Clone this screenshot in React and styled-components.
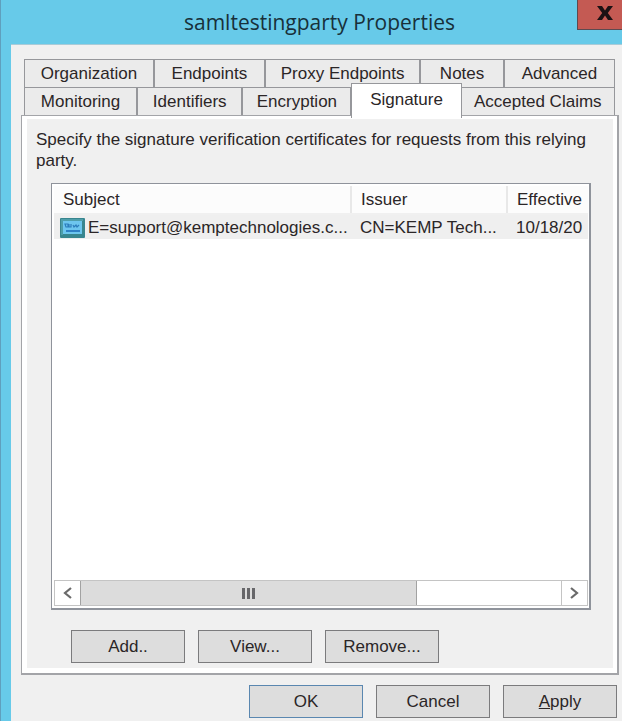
import { useState } from 'react'
import styled, { createGlobalStyle } from 'styled-components'

const GlobalStyle = createGlobalStyle`
  * { box-sizing: border-box; }
  body {
    margin: 0;
    color: #2b2627;
    font-family: "Liberation Sans", Arial, sans-serif;
    font-size: 17px;
    line-height: 21px;
  }
  button {
    font: inherit;
    color: inherit;
    padding: 0;
  }
`;

const Window = styled.div`
  display: flex;
  flex-direction: column;
  min-height: 100vh;
  border-left: 1px solid #5f9fbd;
  background: #67cae9;
`;

const TitleBar = styled.header`
  display: flex;
  align-items: flex-start;
  height: 44px;
  padding-left: 61px;
`;

const Title = styled.h1`
  flex: 1;
  margin: 0;
  text-align: center;
  font-family: "Open Sans", "Noto Sans", sans-serif;
  font-size: 21px;
  font-weight: 400;
  line-height: 44px;
  color: #18303a;
`;

const CloseButton = styled.button`
  display: flex;
  align-items: center;
  justify-content: center;
  width: 45px;
  height: 30px;
  padding: 0 0 4px 10px;
  border: 1px solid #5d4a50;
  border-width: 0 0 1px 1px;
  background: #c45a53;
`;

const Body = styled.main`
  flex: 1;
  margin-left: 10px;
  padding: 14px 3px 4px 10px;
  border-top: 1px solid #a9cbd8;
  background: #f0f0f0;
`;

const TabRow = styled.div`
  display: flex;
  margin: 0 4px 0 3px;
  height: 28px;
  border-left: 1px solid #96979b;
`;

const Tab = styled.button`
  position: relative;
  flex: ${({ $size }) => $size} 1 0;
  border: 1px solid #96979b;
  border-width: 1px 2px 0 0;
  background: #ebebeb;
  white-space: nowrap;
  &:last-child {
    border-right-width: 1px;
  }
  &[aria-selected='true'] {
    z-index: 1;
    margin: -4px 0 -3px -1px;
    padding-bottom: 3px;
    border-width: 1px 1px 0 1px;
    background: #fff;
  }
`;

const Panel = styled.section`
  padding: 3px 4px 5px 5px;
  border: 1px solid #a3a4a8;
  border-width: 1px 2px 2px 1px;
  background: #fff;
`;

const PanelInner = styled.div`
  padding: 10px 22px 5px 9px;
  background: #f0f0f0;
`;

const Description = styled.p`
  margin: 0 0 12px;
`;

const ListView = styled.div`
  display: flex;
  flex-direction: column;
  min-height: 427px;
  margin-left: 15px;
  padding: 2px 1px 2px 2px;
  border: 1px solid #8f939b;
  border-width: 1px 2px 2px 1px;
  background: #fff;
`;

const Table = styled.table`
  width: 100%;
  table-layout: fixed;
  border-collapse: collapse;
`;

const HeadCell = styled.th`
  width: ${({ $width }) => $width};
  height: 28px;
  padding: 0 0 0 9px;
  border-right: 2px solid #e8e8e8;
  border-bottom: 2px solid #f0f0f0;
  background: #fcfcfc;
  font-weight: 400;
  text-align: left;
  white-space: nowrap;
  overflow: hidden;
  &:last-child {
    border-right: 0;
  }
`;

const Cell = styled.td`
  height: 25px;
  padding: 0 0 0 9px;
  background: #efefef;
  white-space: nowrap;
  overflow: hidden;
`;

const SubjectCell = styled(Cell)`
  padding-left: 6px;
  svg {
    margin-right: 3px;
    vertical-align: -5px;
  }
`;

const ScrollBar = styled.div`
  display: flex;
  height: 26px;
  margin: auto 0 0;
  border: 1px solid #c4c4c4;
`;

const ScrollArrow = styled.button`
  display: flex;
  align-items: center;
  justify-content: center;
  width: 25px;
  border: 0;
  background: #fff;
`;

const Track = styled.div`
  flex: 1;
  border-right: 1px solid #c4c4c4;
`;

const Thumb = styled.div`
  display: flex;
  align-items: center;
  justify-content: center;
  gap: 2px;
  width: 70%;
  height: 100%;
  border: 1px solid #a2a2a2;
  border-width: 0 1px;
  background: #dcdcdc;
`;

const Grip = styled.span`
  width: 3px;
  height: 11px;
  background: #67676a;
`;

const ButtonRow = styled.div`
  display: flex;
  gap: 13px;
  justify-content: ${({ $align }) => $align};
`;

const ListActions = styled(ButtonRow)`
  margin: 20px 0 0 35px;
`;

const DialogActions = styled(ButtonRow)`
  margin: 10px 2px 0 0;
`;

const PushButton = styled.button`
  width: 114px;
  height: 33px;
  border: 1px solid ${({ $primary }) => ($primary ? '#5a87b0' : '#7b7b7d')};
  background: #dddddd;
`;

const CertIcon = () => (
  <svg width='25' height='20' viewBox='0 0 25 20' aria-hidden='true'>
    <rect width='25' height='20' rx='1' fill='#38868f' />
    <path d='M1 1h22v2H3v14H1z' fill='#4e9eaa' />
    <rect x='3' y='3' width='19' height='13' fill='#6dc6ee' />
    <path d='M5 6h3v3H6zM9 6v3h2V6M13 7l1 2 2-2 1 2 2-2' stroke='#2c7dbb' strokeWidth='1.2' fill='none' />
    <path d='M6 13h14' stroke='#2f80c5' strokeWidth='2' />
  </svg>
)

const Chevron = ({ d }) => (
  <svg width='9' height='12' viewBox='0 0 9 12' fill='none' stroke='#6a6a6a' strokeWidth='2.2' aria-hidden='true'>
    <path d={d} />
  </svg>
)

const backTabs = [
  { name: 'Organization', size: 130 },
  { name: 'Endpoints', size: 111 },
  { name: 'Proxy Endpoints', size: 156 },
  { name: 'Notes', size: 83 },
  { name: 'Advanced', size: 111 },
]

const frontTabs = [
  { name: 'Monitoring', size: 113 },
  { name: 'Identifiers', size: 105 },
  { name: 'Encryption', size: 109 },
  { name: 'Signature', size: 110 },
  { name: 'Accepted Claims', size: 155 },
]

export default function App() {
  const [active, setActive] = useState('Signature')

  const renderTabs = (tabs) => tabs.map(({ name, size }) => (
    <Tab key={name} type='button' role='tab' $size={size} aria-selected={active === name} onClick={() => setActive(name)}>
      {name}
    </Tab>
  ))

  return (
    <>
      <GlobalStyle />
      <Window>
        <TitleBar>
          <Title>samltestingparty Properties</Title>
          <CloseButton type='button' aria-label='Close'>
            <svg width='16' height='14' viewBox='0 0 16 14' aria-hidden='true'>
              <path d='M0 0h5l3 4.500 3-4.500h5l-5.200 7 5.200 7h-5l-3-4.500-3 4.500H0l5.200-7z' fill='#1c1214' />
            </svg>
          </CloseButton>
        </TitleBar>
        <Body>
          <div role='tablist'>
            <TabRow>{renderTabs(backTabs)}</TabRow>
            <TabRow>{renderTabs(frontTabs)}</TabRow>
          </div>
          <Panel>
            <PanelInner>
              <Description>
                Specify the signature verification certificates for requests from this relying party.
              </Description>
              <ListView>
                <Table>
                  <thead>
                    <tr>
                      <HeadCell $width='297px'>Subject</HeadCell>
                      <HeadCell $width='156px'>Issuer</HeadCell>
                      <HeadCell>Effective</HeadCell>
                    </tr>
                  </thead>
                  <tbody>
                    <tr>
                      <SubjectCell><CertIcon />E=support@kemptechnologies.c...</SubjectCell>
                      <Cell>CN=KEMP Tech...</Cell>
                      <Cell>10/18/20</Cell>
                    </tr>
                  </tbody>
                </Table>
                <ScrollBar>
                  <ScrollArrow type='button' aria-label='Scroll left'><Chevron d='M8 1L2 6l6 5' /></ScrollArrow>
                  <Track>
                    <Thumb><Grip /><Grip /><Grip /></Thumb>
                  </Track>
                  <ScrollArrow type='button' aria-label='Scroll right'><Chevron d='M1 1l6 5-6 5' /></ScrollArrow>
                </ScrollBar>
              </ListView>
              <ListActions>
                <PushButton type='button'>Add..</PushButton>
                <PushButton type='button'>View...</PushButton>
                <PushButton type='button'>Remove...</PushButton>
              </ListActions>
            </PanelInner>
          </Panel>
          <DialogActions $align='flex-end'>
            <PushButton type='button' $primary>OK</PushButton>
            <PushButton type='button'>Cancel</PushButton>
            <PushButton type='button'><u>A</u>pply</PushButton>
          </DialogActions>
        </Body>
      </Window>
    </>
  )
}
